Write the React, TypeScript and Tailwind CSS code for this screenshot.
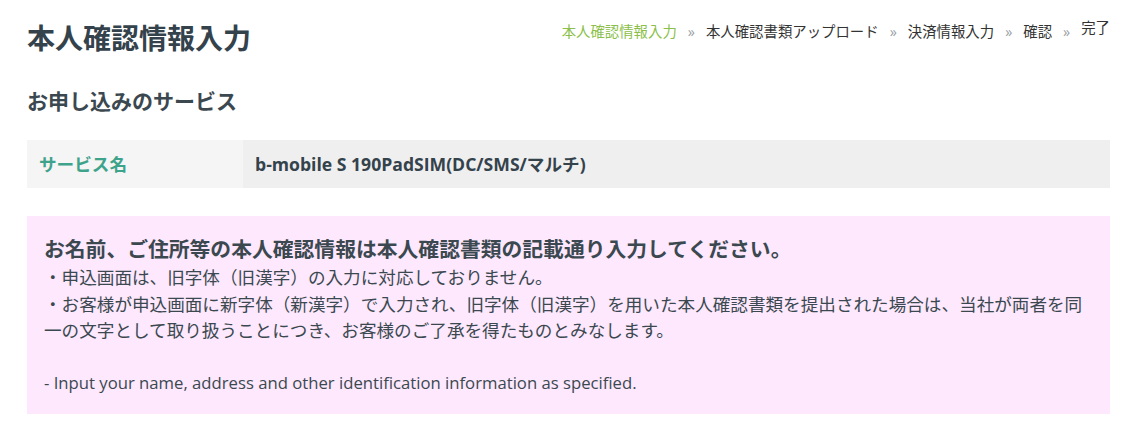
import React from "react";

const font = { fontFamily: '"Open Sans", "Noto Sans CJK JP", sans-serif' };

export default function App() {
  const steps = ["本人確認情報入力", "本人確認書類アップロード", "決済情報入力", "確認"];
  return (
    <div className="bg-white w-[1133px] h-[424px] pl-[27px] pr-[23px] text-[#34424c]" style={font}>
      <div className="flex justify-between items-start pt-[18px]">
        <h1 className="text-[28px] leading-[40px] font-bold">本人確認情報入力</h1>
        <div className="flex items-end text-[14.4px] leading-[20px] pt-0">
          {steps.map((s, i) => (
            <React.Fragment key={s}>
              <span className={i === 0 ? "text-[#8cbf4a]" : "text-[#333]"}>{s}</span>
              <span className="mx-[11px] text-[#9aa0a6] text-[14.4px]">»</span>
            </React.Fragment>
          ))}
          <span className="text-[#333] mb-[4px]">完了</span>
        </div>
      </div>
      <h2 className="text-[21px] leading-[30px] font-bold mt-[28px] text-[#3b4850]">お申し込みのサービス</h2>
      <div className="flex mt-[24px] h-[48px] items-stretch">
        <div className="w-[216px] bg-[#f5f5f5] flex items-center pl-[12px] text-[17.6px] font-bold text-[#3ea38b]">サービス名</div>
        <div className="flex-1 bg-[#efefef] flex items-center pl-[12px] text-[17.6px] font-bold text-[#34424c]">b-mobile S 190PadSIM(DC/SMS/マルチ)</div>
      </div>
      <div className="mt-[28px] bg-[#fde8fd] px-[17px] pt-[18px] pb-[17px] text-[#3b4850]">
        <p className="text-[20.8px] leading-[30px] font-bold">お名前、ご住所等の本人確認情報は本人確認書類の記載通り入力してください。</p>
        <p className="text-[17.6px] leading-[26.5px]">・申込画面は、旧字体（旧漢字）の入力に対応しておりません。</p>
        <p className="text-[17.6px] leading-[26.5px]">・お客様が申込画面に新字体（新漢字）で入力され、旧字体（旧漢字）を用いた本人確認書類を提出された場合は、当社が両者を同一の文字として取り扱うことにつき、お客様のご了承を得たものとみなします。</p>
        <p className="text-[17.6px] leading-[26.5px]">&nbsp;</p>
        <p className="text-[16.7px] leading-[26.5px]">- Input your name, address and other identification information as specified.</p>
      </div>
    </div>
  );
}
